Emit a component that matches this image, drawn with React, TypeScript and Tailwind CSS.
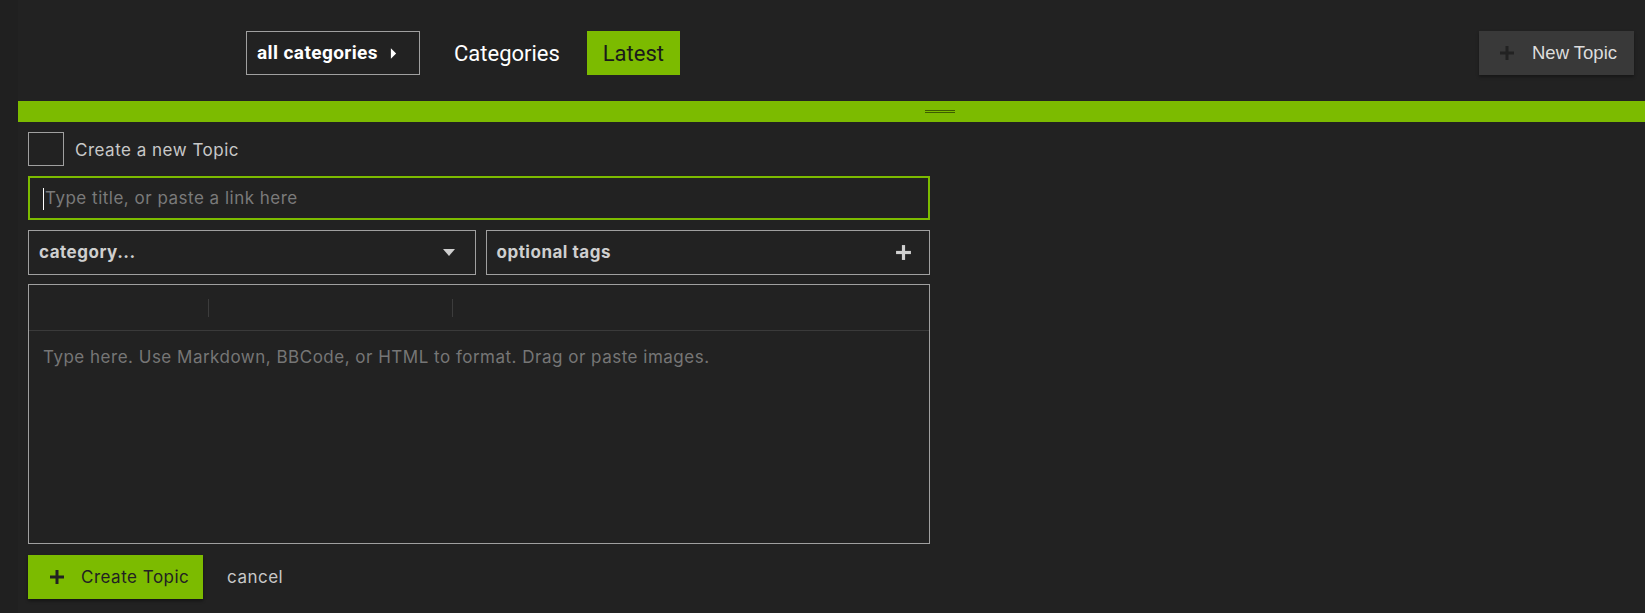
import React from "react";

const GREEN = "bg-[#7cbb00]";

function Plus({ className }: { className?: string }) {
  return (
    <svg viewBox="0 0 16 16" className={className} fill="currentColor">
      <rect x="6.5" y="1" width="3" height="14" />
      <rect x="1" y="6.5" width="14" height="3" />
    </svg>
  );
}

export default function App() {
  return (
    <div className="flex h-[613px] w-[1645px] overflow-hidden bg-[#222222] font-['Inter',sans-serif]">
      <div className="w-[18px] shrink-0 bg-[#202020]" />
      <div className="flex flex-1 flex-col">
        {/* header */}
        <div className="flex h-[101px] items-start pt-[31px]">
          <div className="ml-[228px] flex h-[44px] w-[174px] items-center border border-[#a0a0a0] pl-[10px] font-['Roboto',sans-serif] text-[19px] font-bold tracking-[0.4px] text-white">
            all categories
            <svg viewBox="0 0 8 12" className="ml-[12px] h-[11px] w-[7px]" fill="currentColor">
              <path d="M1 0 L7 6 L1 12 Z" />
            </svg>
          </div>
          <div className="ml-[34px] flex h-[44px] items-center font-['Roboto',sans-serif] text-[22px] text-white">
            Categories
          </div>
          <div className={`ml-[27px] flex h-[44px] w-[93px] items-center justify-center ${GREEN} font-['Roboto',sans-serif] text-[22px] text-[#1a1a1a]`}>
            Latest
          </div>
          <div className="flex-1" />
          <button className="mr-[11px] flex h-[44px] w-[155px] items-center bg-[#393939] pl-[20px] font-['Liberation_Sans',sans-serif] text-[18.5px] text-[#dddddd] shadow-[0_2px_3px_rgba(0,0,0,0.35)]">
            <Plus className="h-[16px] w-[16px] text-[#222222]" />
            <span className="ml-[17px]">New Topic</span>
          </button>
        </div>

        {/* grippie */}
        <div className={`flex h-[21px] items-center ${GREEN}`}>
          <div className="ml-[907px] flex w-[30px] flex-col gap-[1px]">
            <div className="h-[1px] bg-[#3d5c00]" />
            <div className="h-[1px] bg-[#3d5c00]" />
          </div>
        </div>

        {/* composer */}
        <div className="flex w-[912px] flex-col pl-[10px] pt-[10px]">
          <div className="flex h-[34px] items-center">
            <div className="h-[34px] w-[36px] border border-[#a0a0a0]" />
            <span className="ml-[11px] pt-[3px] text-[17px] tracking-[0.5px] text-[#c8c8c8]">Create a new Topic</span>
          </div>

          <div className="mt-[10px] flex h-[44px] items-center border-2 border-[#7cbb00] pl-[13px] pt-[2px] text-[17px] tracking-[0.5px] text-[#7a7a7a]">
            <span className="mr-[1px] h-[22px] w-[1px] bg-white" />
            Type title, or paste a link here
          </div>

          <div className="mt-[10px] flex h-[45px] gap-[10px]">
            <div className="flex flex-1 items-center border border-[#a0a0a0] pl-[10px] pr-[20px] text-[17px] font-bold tracking-[0.5px] text-[#cfcfcf]">
              <span className="pt-[1px]">category...</span>
              <div className="flex-1" />
              <svg viewBox="0 0 12 7" className="h-[7px] w-[12px]" fill="currentColor">
                <path d="M0 0 H12 L6 7 Z" />
              </svg>
            </div>
            <div className="flex flex-1 items-center border border-[#a0a0a0] pl-[10px] pr-[17px] text-[17px] font-bold tracking-[0.5px] text-[#cfcfcf]">
              <span className="pt-[1px]">optional tags</span>
              <div className="flex-1" />
              <Plus className="h-[17px] w-[17px]" />
            </div>
          </div>

          <div className="mt-[9px] flex h-[260px] flex-col border border-[#a0a0a0]">
            <div className="flex h-[46px] items-center border-b border-[#3a3a3a]">
              <div className="ml-[179px] h-[18px] w-[1px] bg-[#3c3c3c]" />
              <div className="ml-[243px] h-[18px] w-[1px] bg-[#3c3c3c]" />
            </div>
            <div className="pl-[14px] pt-[14px] text-[17px] tracking-[0.5px] text-[#767676]">
              Type here. Use Markdown, BBCode, or HTML to format. Drag or paste images.
            </div>
          </div>

          <div className="mt-[11px] flex h-[44px] items-center">
            <button className={`flex h-[44px] w-[175px] items-center ${GREEN} pl-[21px] text-[17px] tracking-[0.5px] text-[#222222] shadow-[0_2px_3px_rgba(0,0,0,0.4)]`}>
              <Plus className="h-[16px] w-[16px]" />
              <span className="ml-[16px] pt-[1px]">Create Topic</span>
            </button>
            <span className="ml-[24px] pt-[1px] text-[17px] tracking-[0.5px] text-[#c8c8c8]">cancel</span>
          </div>
        </div>
      </div>
    </div>
  );
}
